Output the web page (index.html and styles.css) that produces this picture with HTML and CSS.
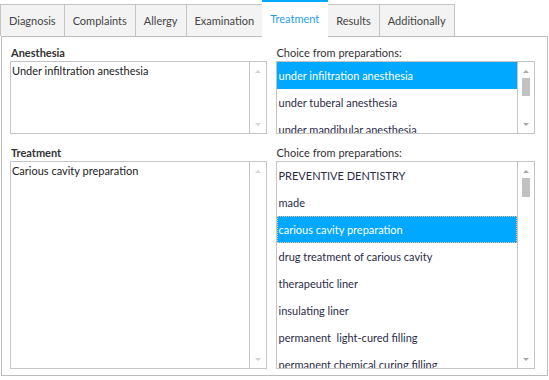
FILE: index.html
```html
<!DOCTYPE html>
<html lang="en">
<head>
<meta charset="UTF-8">
<title>Treatment</title>
<link rel="stylesheet" href="styles.css">
</head>
<body>

  <div class="window">
    <ul class="tabs">
      <li class="tab">Diagnosis</li>
      <li class="tab">Complaints</li>
      <li class="tab">Allergy</li>
      <li class="tab">Examination</li>
      <li class="tab active">Treatment</li>
      <li class="tab">Results</li>
      <li class="tab">Additionally</li>
    </ul>

    <div class="panel">
      <!-- anesthesia row -->
      <div class="row row-small">
        <div class="col">
          <div class="caption bold">Anesthesia</div>
          <div class="box">
            <div class="box-text">Under infiltration anesthesia</div>
            <div class="scroll">
              <span class="arrow up"></span>
              <span class="track"></span>
              <span class="arrow down"></span>
            </div>
          </div>
        </div>
        <div class="col col-right">
          <div class="caption">Choice from preparations:</div>
          <div class="box">
            <ul class="list">
              <li class="selected">under infiltration anesthesia</li>
              <li>under tuberal anesthesia</li>
              <li>under mandibular anesthesia</li>
            </ul>
            <div class="scroll dark">
              <span class="arrow up"></span>
              <span class="track"><span class="thumb"></span></span>
              <span class="arrow down"></span>
            </div>
          </div>
        </div>
      </div>

      <!-- treatment row -->
      <div class="row row-big">
        <div class="col">
          <div class="caption bold">Treatment</div>
          <div class="box">
            <div class="box-text">Carious cavity preparation</div>
            <div class="scroll">
              <span class="arrow up"></span>
              <span class="track"></span>
              <span class="arrow down"></span>
            </div>
          </div>
        </div>
        <div class="col col-right">
          <div class="caption">Choice from preparations:</div>
          <div class="box">
            <ul class="list">
              <li>PREVENTIVE DENTISTRY</li>
              <li>made</li>
              <li class="selected focused">carious cavity preparation</li>
              <li>drug treatment of carious cavity</li>
              <li>therapeutic liner</li>
              <li>insulating liner</li>
              <li>permanent &nbsp;light-cured filling</li>
              <li>permanent chemical curing filling</li>
            </ul>
            <div class="scroll dark">
              <span class="arrow up"></span>
              <span class="track"><span class="thumb thumb-low"></span></span>
              <span class="arrow down"></span>
            </div>
          </div>
        </div>
      </div>
    </div>
  </div>

</body>
</html>
```

FILE: styles.css
```css
body {
  margin: 0;
  background-color: #ffffff;
  font-family: "Lato", "Liberation Sans", sans-serif;
  font-size: 11px;
  color: #333333;
}
.window {
  width: 547px;
  margin-left: 1px;
}
.tabs {
  display: flex;
  align-items: flex-end;
  margin: 0;
  padding: 0;
  list-style: none;
  height: 36px;
  margin-left: -1px;
}
.tab {
  height: 32px;
  line-height: 32px;
  padding: 0 8px;
  margin-right: -1px;
  background-color: #f3f3f3;
  border: 1px solid #c4c4c4;
  border-bottom: none;
  box-sizing: border-box;
  color: #444444;
}
.tab.active {
  position: relative;
  z-index: 1;
  height: 37px;
  margin-bottom: -1px;
  line-height: 34px;
  background-color: #ffffff;
  border: none;
  border-top: 2px solid #00a8ff;
  color: #1f9ee8;
  padding: 0 9px 0 8px;
}
.panel {
  height: 340px;
  border: 1px solid #bcbcbc;
  box-sizing: border-box;
  padding: 9px 12px 0 8px;
}
.row {
  display: flex;
  gap: 9px;
}
.row-big {
  margin-top: 12px;
}
.col {
  width: 257px;
  display: flex;
  flex-direction: column;
}
.col-right {
  width: 260px;
}
.caption {
  height: 15px;
  line-height: 13px;
  padding-left: 1px;
}
.bold {
  font-weight: bold;
}
.box {
  display: flex;
  border: 1px solid #c4c4c4;
  background-color: #ffffff;
  overflow: hidden;
}
.row-small .box {
  height: 73px;
  box-sizing: border-box;
}
.row-big .box {
  height: 208px;
  box-sizing: border-box;
}
.box-text {
  flex: 1;
  padding: 2px 1px;
  line-height: 14px;
  color: #222222;
}
.list {
  flex: 1;
  margin: 0;
  padding: 0;
  list-style: none;
  color: #2b2b48;
}
.list li {
  height: 27px;
  line-height: 27px;
  padding-left: 2px;
  white-space: nowrap;
}
.list li.selected {
  background-color: #00a8ff;
  color: #ffffff;
}
.list li.focused {
  outline: 1px dotted #f6b995;
  outline-offset: -1px;
}
.scroll {
  width: 16px;
  border-left: 1px solid #c4c4c4;
  display: flex;
  flex-direction: column;
  align-items: center;
  padding: 8px 0 7px;
}
.track {
  flex: 1;
  width: 8px;
}
.thumb {
  display: block;
  width: 8px;
  height: 18px;
  margin-top: 5px;
  background-color: #c2c2c2;
}
.thumb-low {
  height: 19px;
  margin-top: 5px;
}
.arrow {
  width: 0;
  height: 0;
  border-left: 3px solid transparent;
  border-right: 3px solid transparent;
}
.arrow.up {
  border-bottom: 3px solid #d4d4d4;
}
.arrow.down {
  border-top: 3px solid #d4d4d4;
}
.dark .arrow.up {
  border-bottom-color: #a8a8a8;
}
.dark .arrow.down {
  border-top-color: #a8a8a8;
}
```
